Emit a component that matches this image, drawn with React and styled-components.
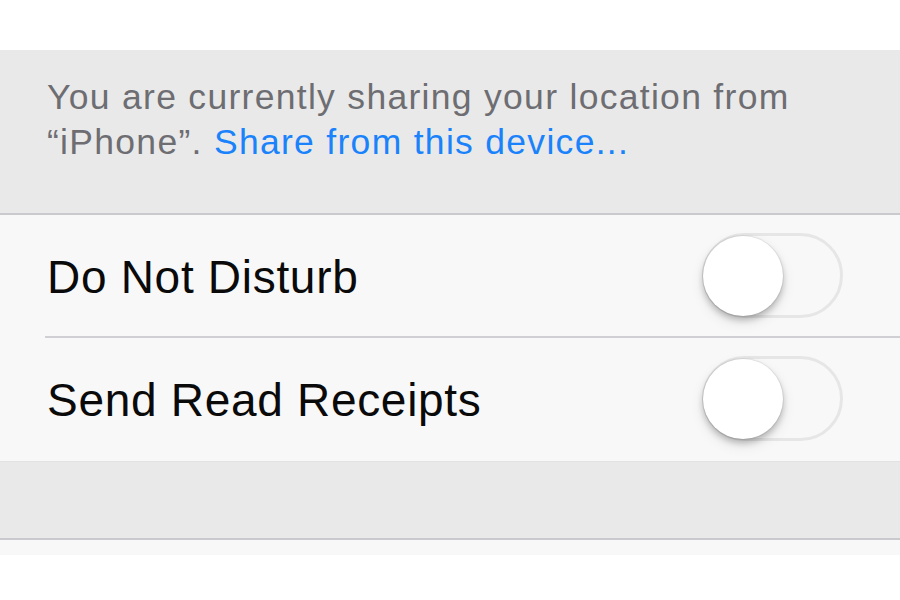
import React, { useState } from "react";
import styled, { createGlobalStyle } from "styled-components";

const Global = createGlobalStyle`
  html, body { margin: 0; padding: 0; background: #fff; }
  body { font-family: "Liberation Sans", Arial, sans-serif; -webkit-font-smoothing: antialiased; }
`;

const Page = styled.div`
  width: 900px;
  height: 600px;
  overflow: hidden;
  padding-top: 50px;
  box-sizing: border-box;
  background: #fff;
`;

const Footer = styled.div`
  background: #e9e9e9;
  padding: 25px 0 0 47px;
  height: 165px;
  box-sizing: border-box;
  border-bottom: 2px solid #c9c9ce;
  font-size: 35.5px;
  line-height: 45px;
  letter-spacing: 1.3px;
  color: #6d6d72;
`;

const Link = styled.a`
  color: #1a82fb;
  text-decoration: none;
`;

const Group = styled.div`
  background: #f8f8f8;
`;

const Row = styled.div`
  height: 123px;
  display: flex;
  align-items: center;
  justify-content: space-between;
  padding: 0 57px 0 47px;
  box-sizing: border-box;
  position: relative;
  ${(p) =>
    p.divider &&
    `&::after {
      content: "";
      position: absolute;
      left: 45px; right: 0; bottom: 0;
      height: 2px;
      background: #d0d0d4;
    }`}
`;

const Label = styled.span`
  font-size: 46px;
  letter-spacing: 0.7px;
  color: #0a0a0a;
`;

const Track = styled.button`
  width: 141px;
  height: 85px;
  border-radius: 43px;
  border: 3px solid #e6e6e6;
  background: ${(p) => (p.on ? "#4cd964" : "#f8f8f8")};
  position: relative;
  padding: 0;
  cursor: pointer;
  box-sizing: border-box;
  margin-top: -2px;
`;

const Knob = styled.span`
  position: absolute;
  top: 0;
  left: ${(p) => (p.on ? "57px" : "-2px")};
  width: 80px;
  height: 80px;
  border-radius: 50%;
  background: #fff;
  box-shadow: 0 0 0 1px rgba(0, 0, 0, 0.06), 0 4px 6px rgba(0, 0, 0, 0.22),
    0 6px 14px rgba(0, 0, 0, 0.1);
`;

const Spacer = styled.div`
  background: #e9e9e9;
  height: 79px;
  border-bottom: 2px solid #c9c9ce;
  border-top: 1px solid #e2e2e2;
  box-sizing: border-box;
`;

const Tail = styled.div`
  background: #f8f8f8;
  height: 15px;
`;

function Toggle() {
  const [on, setOn] = useState(false);
  return (
    <Track on={on ? 1 : 0} onClick={() => setOn(!on)}>
      <Knob on={on ? 1 : 0} />
    </Track>
  );
}

export default function App() {
  return (
    <>
      <Global />
      <Page>
        <Footer>
          You are currently sharing your location from
          <br />
          “iPhone”. <Link href="#">Share from this device...</Link>
        </Footer>
        <Group>
          <Row divider>
            <Label>Do Not Disturb</Label>
            <Toggle />
          </Row>
          <Row>
            <Label>Send Read Receipts</Label>
            <Toggle />
          </Row>
        </Group>
        <Spacer />
        <Tail />
      </Page>
    </>
  );
}
